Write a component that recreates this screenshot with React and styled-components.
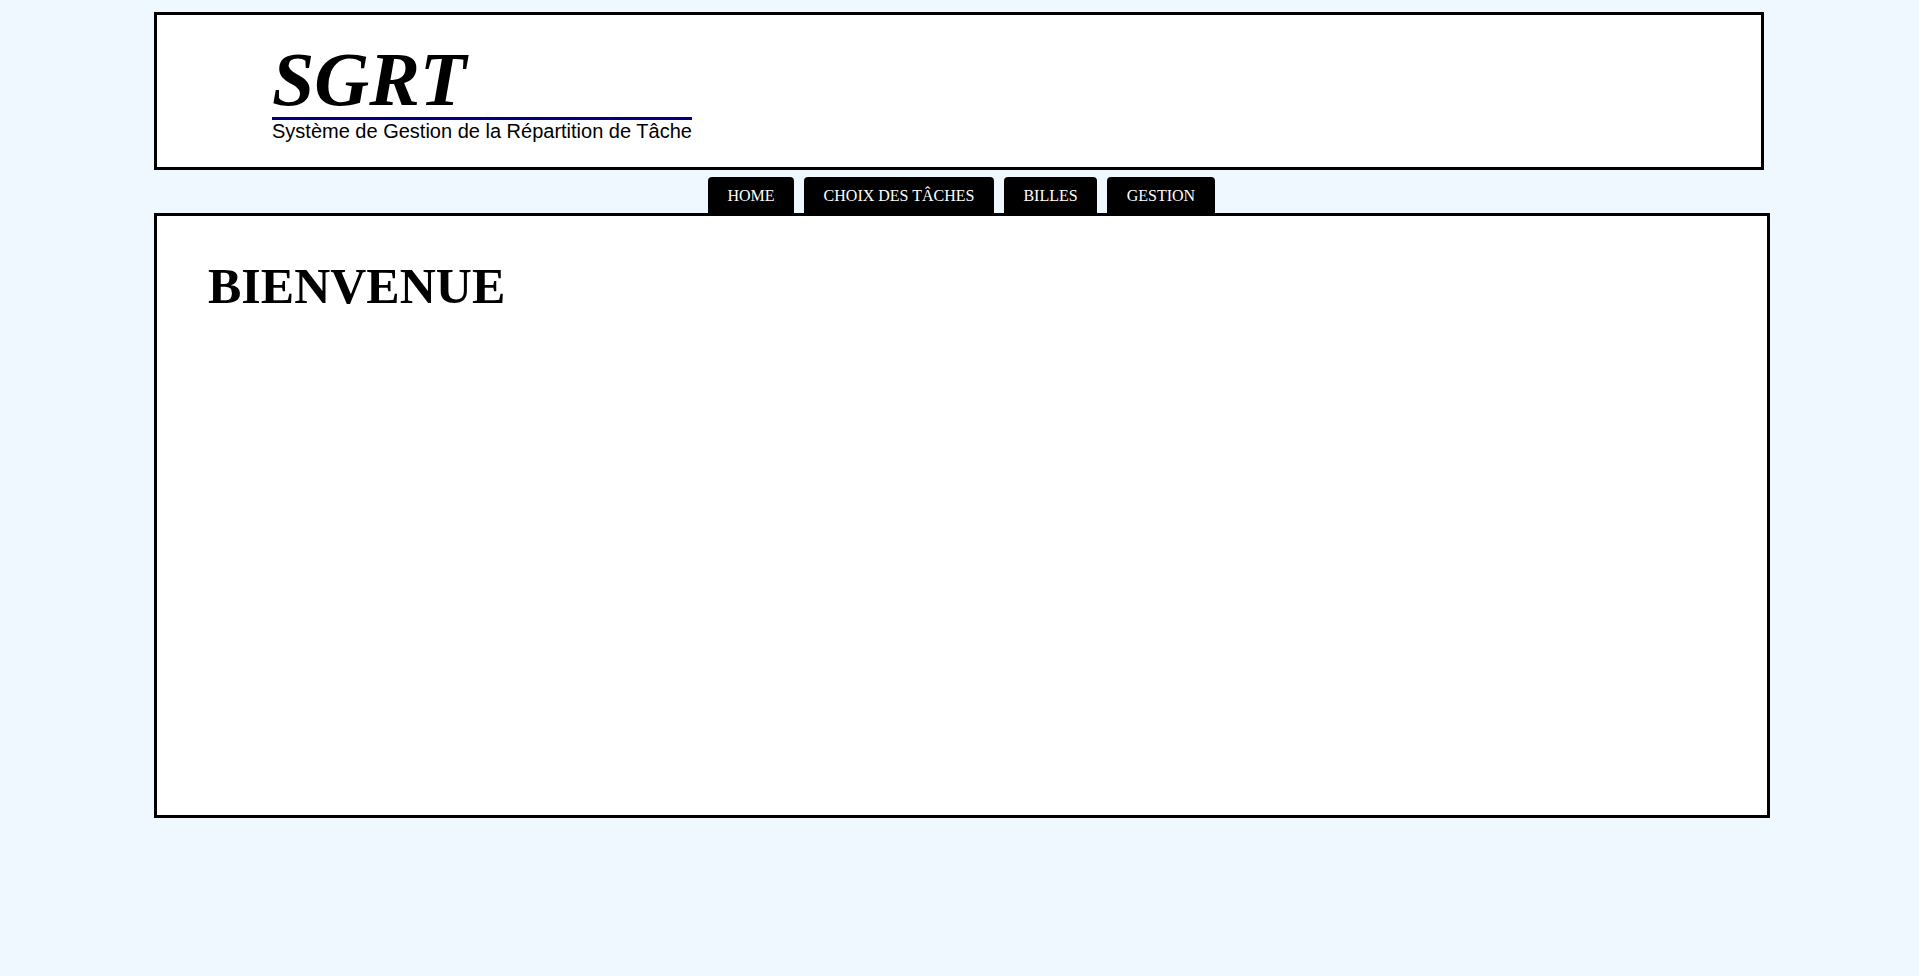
import React from "react";
import styled, { createGlobalStyle } from "styled-components";

const GlobalStyle = createGlobalStyle`
    html, body {
        margin: 0;
        padding: 0;
        background-color: #f0f8ff;
        min-height: 100%;
    }
    body {
        font-family: "Liberation Serif", "Times New Roman", serif;
    }
`;

const Page = styled.div`
    width: 1616px;
    margin-left: 154px;
    padding-top: 12px;
`;

const Header = styled.header`
    box-sizing: border-box;
    width: 1610px;
    height: 158px;
    border: 3px solid #000;
    background-color: #fff;
    padding: 27px 0 0 115px;
`;

const Logo = styled.div`
    display: inline-block;
`;

const Title = styled.h1`
    margin: 0;
    font-family: "Liberation Serif", "Times New Roman", serif;
    font-size: 76px;
    font-weight: bold;
    font-style: italic;
    line-height: 75px;
    color: #000;
`;

const Rule = styled.div`
    height: 3px;
    background-color: #000080;
`;

const Subtitle = styled.div`
    margin-top: 1px;
    font-family: "Liberation Sans", Arial, sans-serif;
    font-size: 20px;
    line-height: 1;
    color: #000;
    white-space: nowrap;
`;

const Nav = styled.nav`
    display: flex;
    gap: 10px;
    padding: 7px 0 0 554px;
`;

const Tab = styled.a`
    display: block;
    height: 36px;
    line-height: 38px;
    padding: 0 19.5px;
    background-color: #000;
    color: #fff;
    border-radius: 4px 4px 0 0;
    font-family: "Liberation Serif", "Times New Roman", serif;
    font-size: 16px;
    text-transform: uppercase;
    text-decoration: none;
    cursor: pointer;
`;

const Main = styled.main`
    box-sizing: border-box;
    width: 1616px;
    height: 605px;
    border: 3px solid #000;
    background-color: #fff;
    padding: 45px 0 0 51px;
`;

const Heading = styled.h2`
    margin: 0;
    font-family: "Liberation Serif", "Times New Roman", serif;
    font-size: 50px;
    font-weight: bold;
    line-height: 1;
    color: #000;
`;

const tabs = ["Home", "Choix des tâches", "Billes", "Gestion"];

export default function App() {
    return (
        <>
            <GlobalStyle />
            <Page>
                <Header>
                    <Logo>
                        <Title>SGRT</Title>
                        <Rule />
                        <Subtitle>Système de Gestion de la Répartition de Tâche</Subtitle>
                    </Logo>
                </Header>
                <Nav>
                    {tabs.map((t) => (
                        <Tab key={t}>{t}</Tab>
                    ))}
                </Nav>
                <Main>
                    <Heading>BIENVENUE</Heading>
                </Main>
            </Page>
        </>
    );
}
